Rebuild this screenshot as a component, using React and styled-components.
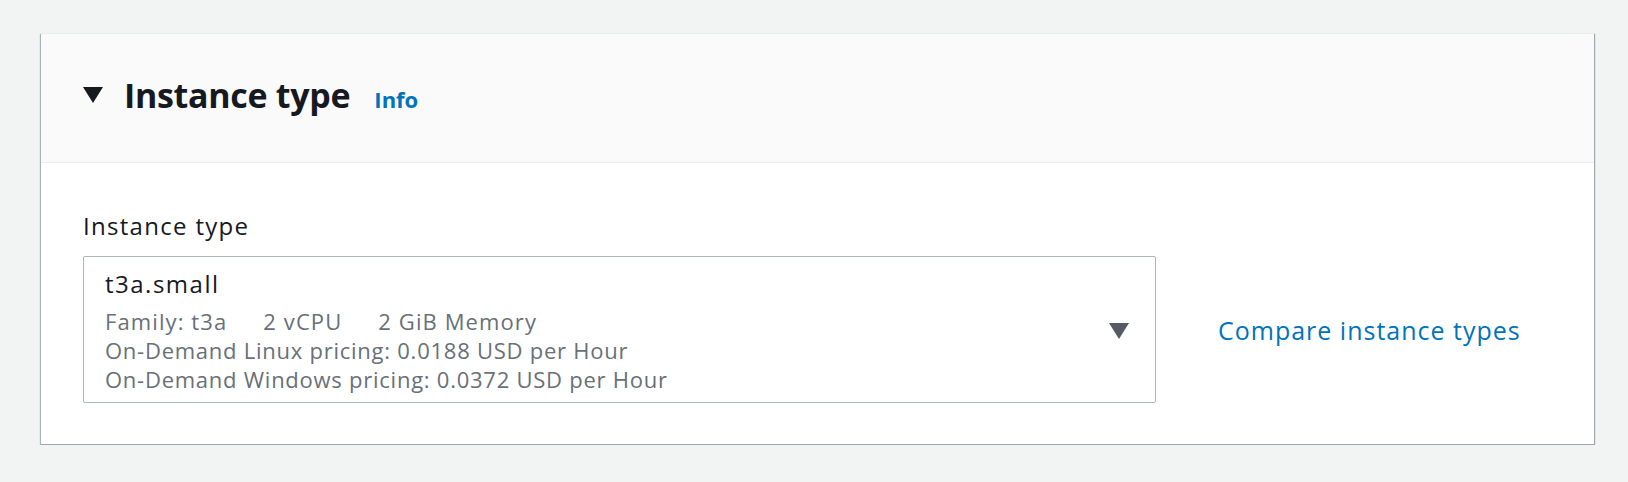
import React from 'react'
import styled, { createGlobalStyle } from 'styled-components';

const GlobalStyle = createGlobalStyle`
  body {
    margin: 0;
    padding: 33px 34px 0 41px;
    background: #f2f3f3;
    font-family: "Open Sans", "Liberation Sans", sans-serif;
    color: #16191f;
  }
`;

const Card = styled.section`
  background: #ffffff;
  border-top: 1px solid #eaeded;
  border-bottom: 1px solid #9ba7a8;
  box-shadow: 0 1px 1px 0 rgba(0, 28, 36, 0.35),
    1px 1px 1px 0 rgba(0, 28, 36, 0.3),
    -1px 1px 1px 0 rgba(0, 28, 36, 0.25);
`;

const Header = styled.div`
  display: flex;
  align-items: center;
  gap: 21px;
  padding: 41px 42px 47px;
  background: #fafafa;
  border-bottom: 1px solid #eaeded;
`;

const Caret = styled.span`
  width: 0;
  height: 0;
  border-left: 10px solid transparent;
  border-right: 10px solid transparent;
  border-top: 16px solid ${p => p.color};
`;

const TitleGroup = styled.div`
  display: flex;
  align-items: baseline;
  gap: 24px;
`;

const Title = styled.h2`
  margin: 0;
  font-size: 34px;
  line-height: 40px;
  font-weight: 700;
  letter-spacing: -0.3px;
  color: #16191f;
`;

const InfoLink = styled.a`
  font-size: 22px;
  font-weight: 700;
  color: #0073bb;
  text-decoration: none;
`;

const Body = styled.div`
  padding: 48px 42px 41px;
`;

const Label = styled.label`
  display: block;
  font-size: 24px;
  line-height: 30px;
  letter-spacing: 1.3px;
  margin-bottom: 15px;
  color: #16191f;
`;

const Row = styled.div`
  display: flex;
  align-items: center;
  gap: 62px;
`;

const Select = styled.div`
  width: 1073px;
  box-sizing: border-box;
  display: flex;
  align-items: center;
  justify-content: space-between;
  padding: 11px 26px 8px 21px;
  border: 1px solid #aab7b8;
  border-radius: 2px;
  background: #ffffff;
`;

const Option = styled.div`
  display: flex;
  flex-direction: column;
`;

const OptionValue = styled.div`
  font-size: 24px;
  line-height: 32px;
  letter-spacing: 1.5px;
  margin-bottom: 7px;
  color: #16191f;
`;

const Tags = styled.div`
  display: flex;
  gap: 36px;
`;

const Detail = styled.div`
  font-size: 22px;
  line-height: 29px;
  letter-spacing: ${p => (p.wide ? '1.1px' : '0.75px')};
  color: #687078;
`;

const CompareLink = styled.a`
  font-size: 25px;
  letter-spacing: 1px;
  color: #0073bb;
  text-decoration: none;
`;

const InstanceType = () => {
  return (
    <Card>
      <GlobalStyle />
      <Header>
        <Caret color="#16191f" />
        <TitleGroup>
          <Title>Instance type</Title>
          <InfoLink href="#">Info</InfoLink>
        </TitleGroup>
      </Header>
      <Body>
        <Label>Instance type</Label>
        <Row>
          <Select>
            <Option>
              <OptionValue>t3a.small</OptionValue>
              <Tags>
                <Detail wide>Family: t3a</Detail>
                <Detail wide>2 vCPU</Detail>
                <Detail wide>2 GiB Memory</Detail>
              </Tags>
              <Detail>On-Demand Linux pricing: 0.0188 USD per Hour</Detail>
              <Detail>On-Demand Windows pricing: 0.0372 USD per Hour</Detail>
            </Option>
            <Caret color="#545b64" />
          </Select>
          <CompareLink href="#">Compare instance types</CompareLink>
        </Row>
      </Body>
    </Card>
  )
}

export default InstanceType
